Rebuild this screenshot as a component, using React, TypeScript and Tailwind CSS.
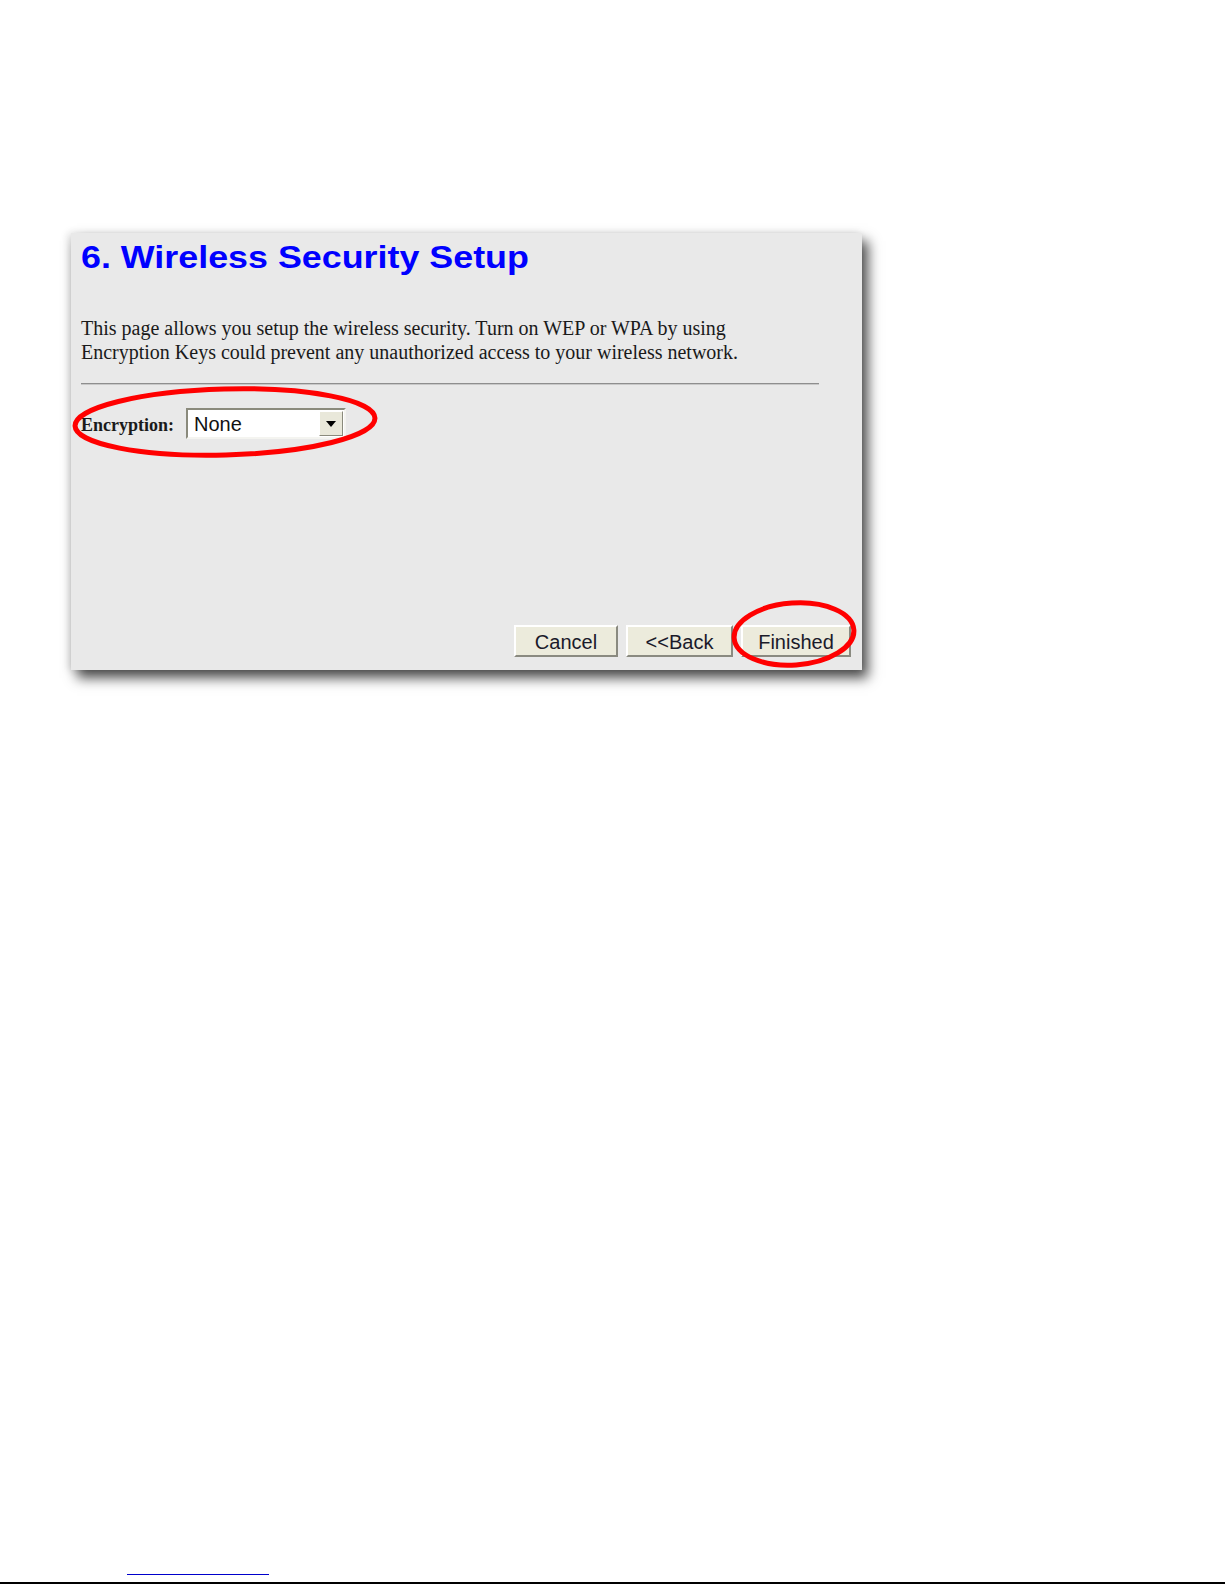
export default function App() {
  return (
    <div className="min-h-[1585px] bg-white flex flex-col" style={{ fontFamily: '"Liberation Sans", Arial, sans-serif' }}>
      <div className="pt-[233px] pl-[71px]">
        {/* Wizard panel */}
        <div className="relative w-[791px] h-[437px] bg-[#e9e9e9] shadow-[6px_8px_12px_rgba(0,0,0,0.7),-3px_0_8px_rgba(0,0,0,0.12)] flex flex-col px-[10px] pt-[6px] pb-[13px]">
          <h1 className="text-[32px] leading-[36px] font-bold text-[#0000ff] origin-left scale-x-[1.12]">
            6. Wireless Security Setup
          </h1>

          <p className="mt-[41px] text-[20px] leading-[24px] text-[#1a1a1a]" style={{ fontFamily: '"Liberation Serif", "Times New Roman", serif' }}>
            This page allows you setup the wireless security. Turn on WEP or WPA by using
            <br />
            Encryption Keys could prevent any unauthorized access to your wireless network.
          </p>

          <div className="mt-[19px] w-[738px] h-[2px] bg-[#8e8e8e] border-b border-[#c8c8c8]" />

          <div className="mt-[23px] flex items-center gap-[12px]">
            <span className="mt-[4px] text-[18px] font-bold text-[#1a1a1a]" style={{ fontFamily: '"Liberation Serif", "Times New Roman", serif' }}>
              Encryption:
            </span>
            <div className="w-[160px] h-[31px] flex border-2 border-t-[#8a8a7c] border-l-[#8a8a7c] border-b-[#f4f4f0] border-r-[#f4f4f0] bg-white">
              <div className="flex-1 flex items-center pl-[6px] text-[20px] text-[#111]">None</div>
              <div className="w-[24px] my-[1px] mr-[1px] bg-[#e9e8da] border border-t-white border-l-white border-b-[#8a8a7c] border-r-[#8a8a7c] flex items-center justify-center">
                <svg width="10" height="6" viewBox="0 0 10 6">
                  <path d="M0 0h10L5 6z" fill="#000" />
                </svg>
              </div>
            </div>
          </div>

          <div className="flex-1" />

          <div className="flex justify-end items-end gap-[8px] pr-[1px]">
            {['Cancel', '<<Back', 'Finished'].map((label, i) => (
              <button
                key={label}
                className={`${i === 0 ? 'w-[104px]' : 'w-[107px]'} ${i === 2 ? 'w-[110px]' : ''} h-[32px] bg-[#ecebdc] text-[20px] text-[#1a1a2a] border-2 border-t-white border-l-white border-b-[#8a8a80] border-r-[#8a8a80]`}
              >
                {label}
              </button>
            ))}
          </div>

          {/* Red hand-drawn highlight rings */}
          <svg className="absolute left-0 top-0 pointer-events-none" width="800" height="445" viewBox="0 0 800 445">
            <ellipse cx="154" cy="189" rx="150" ry="33" fill="none" stroke="#ff0000" strokeWidth="5" transform="rotate(-1.5 154 189)" />
            <ellipse cx="723" cy="401" rx="60" ry="31" fill="none" stroke="#ff0000" strokeWidth="5" transform="rotate(-4 723 401)" />
          </svg>
        </div>
      </div>

      <div className="flex-1" />

      <div className="pl-[127px] pb-[7px]">
        <div className="w-[142px] h-px bg-[#0000cc]" />
      </div>
      <div className="h-[2px] bg-black mb-[1px]" />
    </div>
  );
}
